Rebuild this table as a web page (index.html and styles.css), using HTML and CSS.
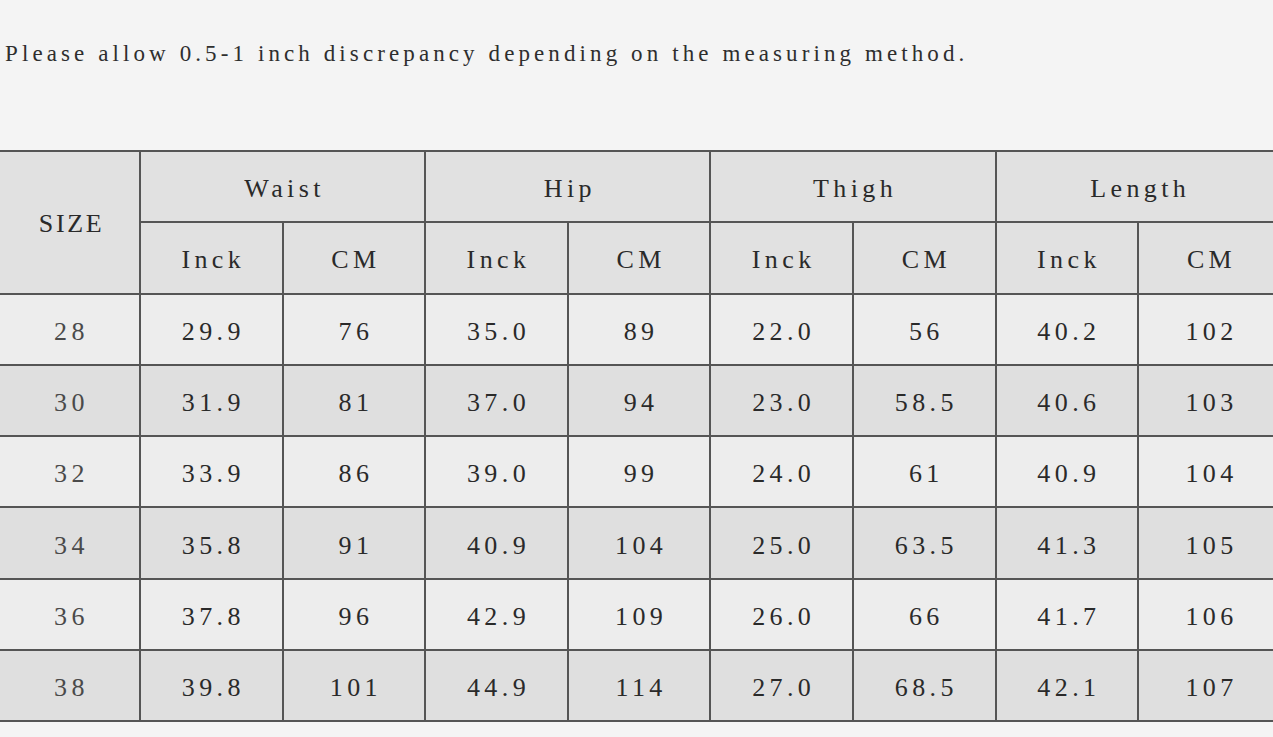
FILE: index.html
```html
<!DOCTYPE html>
<html>
<head>
<meta charset="utf-8">
<link rel="stylesheet" href="styles.css">
</head>
<body>
<div class="page">
  <p class="note">Please allow 0.5-1 inch discrepancy depending on the measuring method.</p>
  <table class="chart">
    <colgroup>
      <col class="c-size">
      <col span="8" class="c-val">
    </colgroup>
    <thead>
      <tr class="hrow">
        <th rowspan="2" class="size-head">SIZE</th>
        <th colspan="2">Waist</th>
        <th colspan="2">Hip</th>
        <th colspan="2">Thigh</th>
        <th colspan="2">Length</th>
      </tr>
      <tr class="hrow">
        <th>Inck</th><th>CM</th>
        <th>Inck</th><th>CM</th>
        <th>Inck</th><th>CM</th>
        <th>Inck</th><th>CM</th>
      </tr>
    </thead>
    <tbody>
      <tr class="light"><td>28</td><td>29.9</td><td>76</td><td>35.0</td><td>89</td><td>22.0</td><td>56</td><td>40.2</td><td>102</td></tr>
      <tr class="dark"><td>30</td><td>31.9</td><td>81</td><td>37.0</td><td>94</td><td>23.0</td><td>58.5</td><td>40.6</td><td>103</td></tr>
      <tr class="light"><td>32</td><td>33.9</td><td>86</td><td>39.0</td><td>99</td><td>24.0</td><td>61</td><td>40.9</td><td>104</td></tr>
      <tr class="dark"><td>34</td><td>35.8</td><td>91</td><td>40.9</td><td>104</td><td>25.0</td><td>63.5</td><td>41.3</td><td>105</td></tr>
      <tr class="light"><td>36</td><td>37.8</td><td>96</td><td>42.9</td><td>109</td><td>26.0</td><td>66</td><td>41.7</td><td>106</td></tr>
      <tr class="dark"><td>38</td><td>39.8</td><td>101</td><td>44.9</td><td>114</td><td>27.0</td><td>68.5</td><td>42.1</td><td>107</td></tr>
    </tbody>
  </table>
</div>
</body>
</html>
```

FILE: styles.css
```css
html, body {
  margin: 0;
  padding: 0;
  background: #f4f4f4;
  overflow: hidden;
}

.page {
  width: 1273px;
  height: 737px;
  overflow: hidden;
  font-family: "Liberation Serif", "DejaVu Serif", serif;
  color: #333333;
}

.note {
  margin: 0;
  padding: 40px 0 0 5px;
  font-size: 23px;
  line-height: 28px;
  letter-spacing: 4.1px;
  color: #2e2e2e;
  white-space: nowrap;
}

.chart {
  margin-top: 82px;
  margin-left: -2px;
  border-collapse: collapse;
  table-layout: fixed;
  width: 1282px;
  font-size: 26px;
  letter-spacing: 4.4px;
}

.c-size { width: 141px; }
.c-val { width: 142.6px; }

.chart th,
.chart td {
  border: 2px solid #555555;
  height: 64.3px;
  padding: 5px 0 0 4px;
  text-align: center;
  vertical-align: middle;
  font-weight: normal;
  color: #2a2a2a;
}

.chart .size-head {
  border-left-color: #d8d8d8;
  padding-top: 4px;
  letter-spacing: 2.6px;
}
.chart tbody td:first-child { border-left-color: #d8d8d8; color: #4a4a4a; }

.hrow th { background: #e1e1e1; }
.light td { background: #ededed; }
.dark td { background: #dfdfdf; }
```
